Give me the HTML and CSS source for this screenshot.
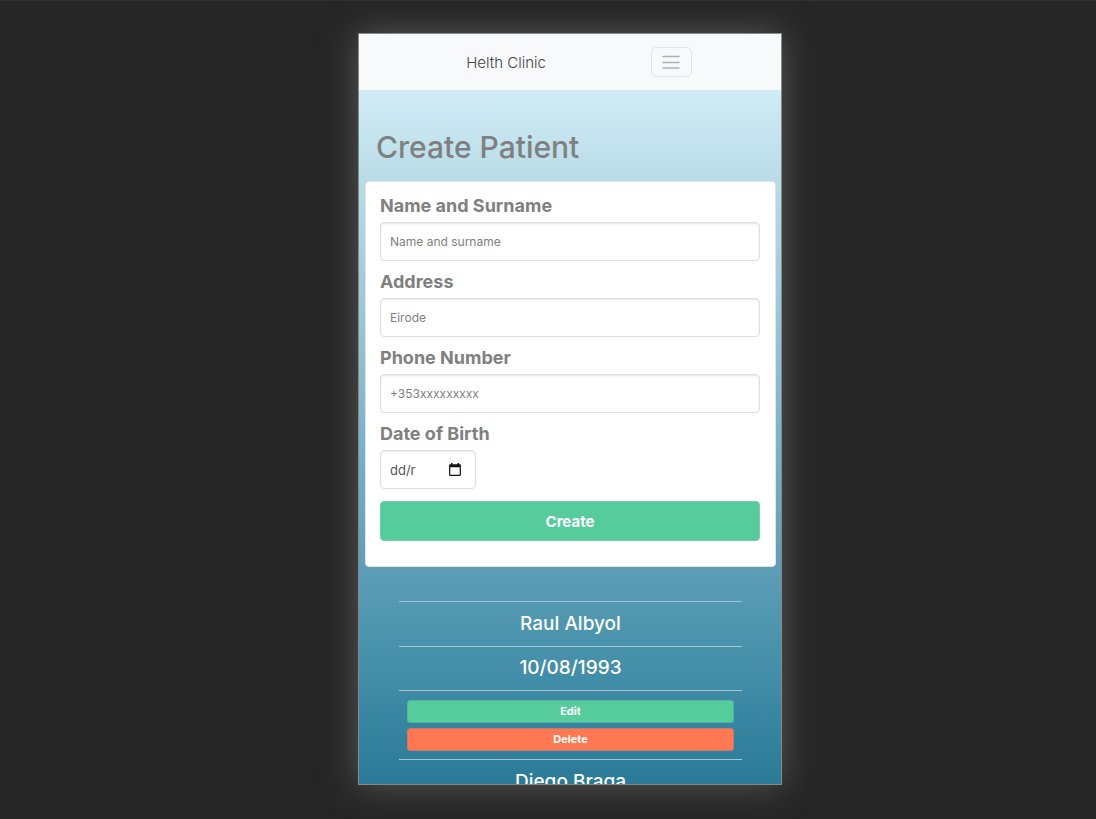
FILE: index.html
```html
<!DOCTYPE html>
<html lang="en">
<head>
<meta charset="utf-8">
<meta name="viewport" content="width=device-width, initial-scale=1">
<title>Helth Clinic</title>
<link rel="stylesheet" href="styles.css">
</head>
<body>
<div class="phone">
  <header class="navbar">
    <a class="brand" href="#">Helth Clinic</a>
    <button class="toggler" type="button" aria-label="Toggle navigation">
      <svg width="18" height="14" viewBox="0 0 18 14" fill="none" stroke="#aeafb1" stroke-width="1.5" stroke-linecap="round"><path d="M1 1.500h16M1 7.500h16M1 13h16"/></svg>
    </button>
  </header>
  <main class="content">
    <h1 class="title">Create Patient</h1>
    <form class="card">
      <div class="field">
        <label for="name">Name and Surname</label>
        <input class="control" id="name" type="text" placeholder="Name and surname">
      </div>
      <div class="field">
        <label for="address">Address</label>
        <input class="control" id="address" type="text" placeholder="Eirode">
      </div>
      <div class="field">
        <label for="phone">Phone Number</label>
        <input class="control" id="phone" type="tel" placeholder="+353xxxxxxxxx">
      </div>
      <div class="field">
        <label for="birth">Date of Birth</label>
        <div class="control date">
          <input class="date-text" id="birth" type="text" value="dd/r">
          <button class="date-picker" type="button" aria-label="Show date picker">
            <svg width="12" height="13" viewBox="0 0 12 13"><path d="M2 0h1.500v1.200h5V0H10v1.200h1q.9 0 .9.900V12q0 .9-.9.900H1Q.1 12.900.1 12V2.100q0-.9.9-.9h1zM1.300 4.200v7.500h9.400V4.200z" fill="#111" fill-rule="evenodd"/></svg>
          </button>
        </div>
      </div>
      <button class="btn create" type="submit">Create</button>
    </form>
    <table class="patients">
      <tbody>
        <tr><td>Raul Albyol</td></tr>
        <tr><td class="birth-cell">10/08/1993</td></tr>
        <tr><td class="actions-cell">
          <div class="actions">
            <button class="btn small edit" type="button">Edit</button>
            <button class="btn small delete" type="button">Delete</button>
          </div>
        </td></tr>
        <tr><td>Diego Braga</td></tr>
      </tbody>
    </table>
  </main>
</div>
</body>
</html>
```
FILE: styles.css
```css
* { box-sizing: border-box; }

body {
  margin: 0;
  min-height: 100vh;
  padding: 32px 16px 34px 60px;
  border-top: 1px solid #303030;
  background: #262626;
  font-family: Inter, "Liberation Sans", sans-serif;
  color: #808080;
}

button, input { font-family: inherit; }

.phone {
  display: flex;
  flex-direction: column;
  width: 100%;
  max-width: 424px;
  height: calc(100vh - 67px);
  margin: 0 auto;
  border: 1px solid #888;
  overflow: hidden;
  box-shadow: 0 0 32px #585858;
}

.navbar {
  display: flex;
  flex-shrink: 0;
  align-items: center;
  justify-content: center;
  gap: 105px;
  height: 56px;
  padding-left: 18px;
  background: #f8f9fb;
}

.brand {
  color: #444;
  font-size: 15px;
  font-weight: 300;
  text-decoration: none;
}

.toggler {
  display: flex;
  align-items: center;
  justify-content: center;
  width: 41px;
  height: 30px;
  padding: 0;
  border: 1px solid #e2e3e5;
  border-radius: 5px;
  background: transparent;
}

.content {
  flex: 1;
  min-height: 0;
  overflow: hidden;
  padding: 39px 5px 0 6px;
  background: linear-gradient(#d0ecf6, #b9dce7 13%, #5f9fb7 68%, #4690aa 82%, #2a7a98);
}

.title {
  margin: 0 0 16px 11px;
  font-size: 30px;
  font-weight: 500;
  line-height: 36px;
}

.card {
  display: flex;
  flex-direction: column;
  gap: 9px;
  padding: 12px 15px 25px 14px;
  border: 1px solid #dfe5e8;
  border-radius: 4px;
  background: #fff;
}

.field {
  display: flex;
  flex-direction: column;
  gap: 4px;
}

.field label {
  font-size: 18px;
  font-weight: 700;
  line-height: 24px;
}

.control {
  width: 100%;
  height: 39px;
  padding: 0 9px;
  border: 1px solid #dcdee2;
  border-radius: 4px;
  background: #fff;
  box-shadow: inset 0 1px 2px #e4e5e8;
  color: #555;
  font-size: 12px;
}

.control::placeholder { color: #808080; opacity: 1; }

.date {
  display: flex;
  align-items: center;
  justify-content: space-between;
  width: 96px;
  padding-right: 14px;
}

.date-text {
  width: 40px;
  padding: 0;
  border: 0;
  background: transparent;
  color: #555;
  font-size: 13px;
}

.date-picker {
  display: flex;
  padding: 0;
  border: 0;
  background: transparent;
}

.btn {
  border: 1px solid #6fd1a8;
  border-radius: 4px;
  background: #56cc9d;
  color: #fff;
  font-weight: 700;
  text-align: center;
}

.create {
  height: 40px;
  margin-top: 3px;
  font-size: 15px;
}

.patients {
  width: calc(100% - 68px);
  margin: 34px 34px 0;
  border-collapse: separate;
  border-spacing: 0;
  color: #fff;
  text-align: center;
}

.patients td {
  height: 45px;
  padding: 0 8px 2px;
  border-top: 1px solid #a9c4ce;
  font-size: 19px;
  font-weight: 500;
}

.patients .birth-cell { height: 44px; }

.patients .actions-cell {
  height: auto;
  padding: 9px 8px 8px;
}

.actions {
  display: flex;
  flex-direction: column;
  gap: 5px;
}

.small {
  height: 23px;
  padding: 0 0 2px;
  border-radius: 3px;
  font-size: 11px;
}

.edit { border-color: #4fb5a0; }

.delete {
  border-color: #b97f74;
  background: #ff7851;
}
```
